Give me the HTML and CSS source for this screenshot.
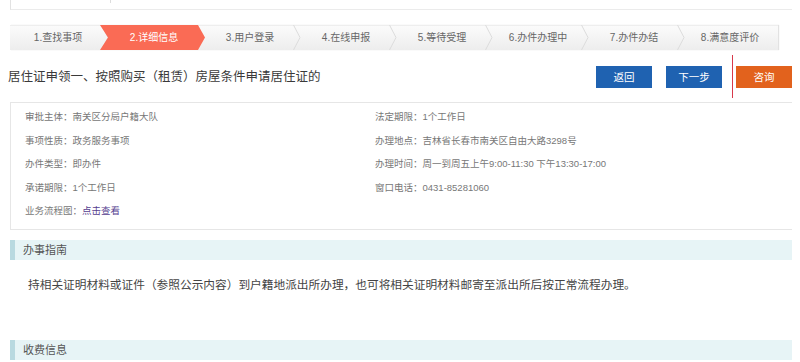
FILE: index.html
```html
<!DOCTYPE html>
<html lang="zh-CN">
<head>
<meta charset="utf-8">
<title>居住证申领</title>
<link rel="stylesheet" href="styles.css">
</head>
<body>
<div class="page">
  <div class="topbox"><span class="tick"></span></div>

  <ol class="steps">
    <li class="step">1.查找事项<svg class="chev" width="8" height="25" viewBox="0 0 8 25"><polyline points="0.5,0 7,12.5 0.5,25" fill="none" stroke="#dcdcdc" stroke-width="1"/></svg></li>
    <li class="step active"><span class="txt">2.详细信息</span></li>
    <li class="step">3.用户登录<svg class="chev" width="8" height="25" viewBox="0 0 8 25"><polyline points="0.5,0 7,12.5 0.5,25" fill="none" stroke="#dcdcdc" stroke-width="1"/></svg></li>
    <li class="step">4.在线申报<svg class="chev" width="8" height="25" viewBox="0 0 8 25"><polyline points="0.5,0 7,12.5 0.5,25" fill="none" stroke="#dcdcdc" stroke-width="1"/></svg></li>
    <li class="step">5.等待受理<svg class="chev" width="8" height="25" viewBox="0 0 8 25"><polyline points="0.5,0 7,12.5 0.5,25" fill="none" stroke="#dcdcdc" stroke-width="1"/></svg></li>
    <li class="step">6.办件办理中<svg class="chev" width="8" height="25" viewBox="0 0 8 25"><polyline points="0.5,0 7,12.5 0.5,25" fill="none" stroke="#dcdcdc" stroke-width="1"/></svg></li>
    <li class="step">7.办件办结<svg class="chev" width="8" height="25" viewBox="0 0 8 25"><polyline points="0.5,0 7,12.5 0.5,25" fill="none" stroke="#dcdcdc" stroke-width="1"/></svg></li>
    <li class="step">8.满意度评价</li>
  </ol>

  <div class="titlerow">
    <h1 class="title">居住证申领一、按照购买（租赁）房屋条件申请居住证的</h1>
    <div class="btns">
      <a class="btn blue">返回</a>
      <a class="btn blue">下一步</a>
      <a class="btn orange">咨询</a>
    </div>
    <span class="redline"></span>
  </div>

  <div class="info">
    <div class="col">
      <p>审批主体：南关区分局户籍大队</p>
      <p>事项性质：政务服务事项</p>
      <p>办件类型：即办件</p>
      <p>承诺期限：1个工作日</p>
      <p>业务流程图：<a class="link">点击查看</a></p>
    </div>
    <div class="col right">
      <p>法定期限：1个工作日</p>
      <p>办理地点：吉林省长春市南关区自由大路3298号</p>
      <p>办理时间：周一到周五上午9:00-11:30 下午13:30-17:00</p>
      <p>窗口电话：0431-85281060</p>
    </div>
  </div>

  <h2 class="sec">办事指南</h2>
  <p class="para">持相关证明材料或证件（参照公示内容）到户籍地派出所办理，也可将相关证明材料邮寄至派出所后按正常流程办理。</p>

  <h2 class="sec sec2">收费信息</h2>
</div>
</body>
</html>
```

FILE: styles.css
```css
* { box-sizing: border-box; }
html, body { margin: 0; padding: 0; background: #fff; }
body {
  font-family: "Liberation Sans", "Noto Sans CJK SC", sans-serif;
  color: #555;
  overflow: hidden;
}
.page { padding-left: 10px; width: 792px; }

.topbox {
  position: relative;
  height: 10px;
  border-left: 1px solid #e2e2e2;
  border-bottom: 1px solid #ebebeb;
}
.topbox .tick {
  position: absolute;
  left: 99px;
  top: 0;
  width: 1px;
  height: 3px;
  background: #ddd;
}

.steps {
  list-style: none;
  margin: 15px 0 0 0;
  padding: 0;
  display: flex;
  width: 768px;
  height: 25px;
  background: linear-gradient(#fbfbfb, #ededed);
  border-top: 1px solid #eeeeee;
  box-shadow: 1px 0 1px #e2e2e2;
}
.step {
  position: relative;
  width: 96px;
  flex: none;
  height: 25px;
  line-height: 24px;
  text-align: center;
  font-size: 10px;
  color: #666;
  white-space: nowrap;
}
.step .chev {
  position: absolute;
  right: -3px;
  top: -1px;
  z-index: 1;
}
.step.active { color: #fff; z-index: 2; }
.step.active::before {
  content: "";
  position: absolute;
  left: -6px;
  top: -1px;
  width: 105px;
  height: 25px;
  background: #fa6b55;
  clip-path: polygon(0 0, 98px 0, 105px 50%, 98px 100%, 0 100%, 8px 50%);
}
.step.active .txt { position: relative; }

.titlerow {
  position: relative;
  display: flex;
  align-items: center;
  justify-content: space-between;
  height: 52px;
  padding-top: 2px;
}
.title {
  margin: 0 0 0 -2px;
  font-size: 12.5px;
  font-weight: normal;
  color: #3a3a3a;
  line-height: 20px;
}
.btns { display: flex; gap: 14px; margin-top: 0; }
.btn {
  display: block;
  width: 56px;
  height: 22px;
  line-height: 22px;
  text-align: center;
  color: #fff;
  font-size: 10.5px;
}
.btn.blue { background: #1f62b1; }
.btn.orange { background: #e2621d; }
.redline {
  position: absolute;
  left: 722px;
  top: 5px;
  width: 1px;
  height: 43px;
  background: #d8394a;
}

.info {
  display: flex;
  border-top: 1px solid #e6e6e6;
  border-left: 1px solid #e6e6e6;
  border-bottom: 1px solid #e6e6e6;
  padding: 2px 0 6px 14px;
}
.info .col { width: 350px; }
.info .col.right { width: auto; }
.info p {
  margin: 0;
  height: 23.5px;
  line-height: 23.5px;
  font-size: 9.5px;
  color: #777;
  white-space: nowrap;
}
.link { color: #553e8f; }

.sec {
  margin: 10px 0 0 0;
  height: 20px;
  line-height: 20px;
  background: #e7f4f6;
  border-left: 5px solid #b9d9e0;
  padding-left: 8px;
  font-size: 11px;
  font-weight: normal;
  color: #555;
}
.para {
  margin: 16px 0 0 18px;
  font-size: 11.7px;
  line-height: 18px;
  color: #444;
}
.sec2 { margin-top: 46px; }
```
